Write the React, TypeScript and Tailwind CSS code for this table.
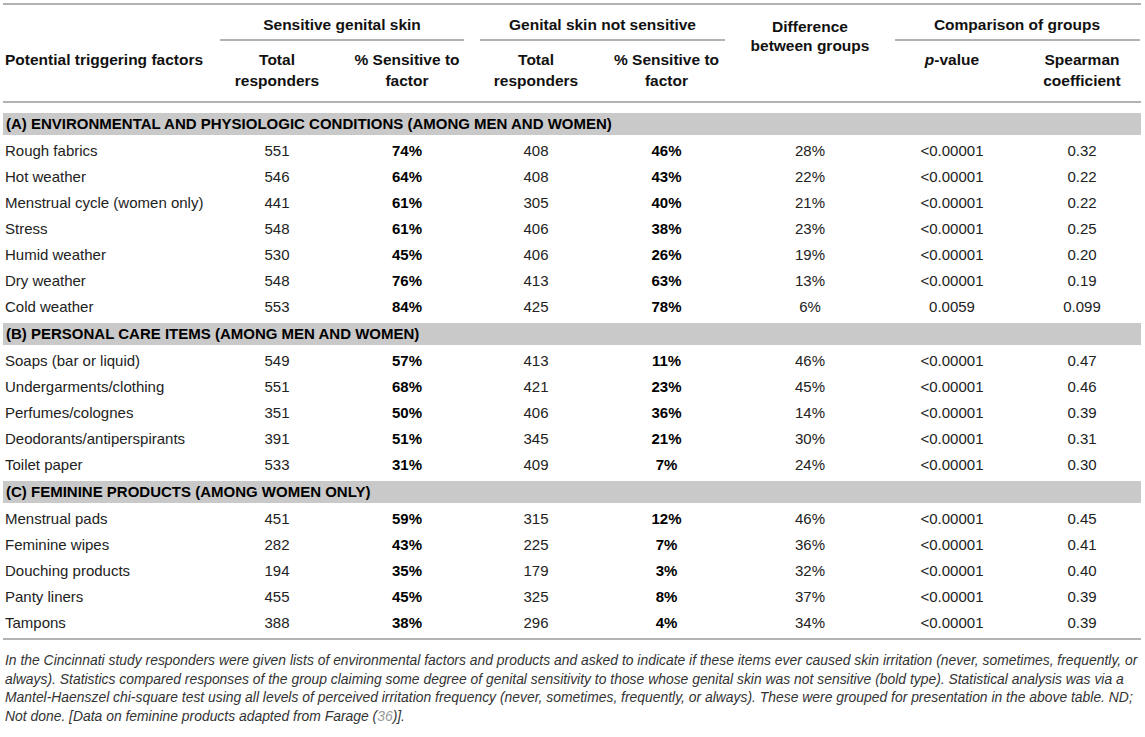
type Row = [string, string, string, string, string, string, string, string];

type Section = {
  title: string;
  rows: Row[];
};

const sections: Section[] = [
  {
    title: "(A) Environmental and physiologic conditions (among men and women)",
    rows: [
      ["Rough fabrics", "551", "74%", "408", "46%", "28%", "<0.00001", "0.32"],
      ["Hot weather", "546", "64%", "408", "43%", "22%", "<0.00001", "0.22"],
      ["Menstrual cycle (women only)", "441", "61%", "305", "40%", "21%", "<0.00001", "0.22"],
      ["Stress", "548", "61%", "406", "38%", "23%", "<0.00001", "0.25"],
      ["Humid weather", "530", "45%", "406", "26%", "19%", "<0.00001", "0.20"],
      ["Dry weather", "548", "76%", "413", "63%", "13%", "<0.00001", "0.19"],
      ["Cold weather", "553", "84%", "425", "78%", "6%", "0.0059", "0.099"],
    ],
  },
  {
    title: "(B) Personal care items (among men and women)",
    rows: [
      ["Soaps (bar or liquid)", "549", "57%", "413", "11%", "46%", "<0.00001", "0.47"],
      ["Undergarments/clothing", "551", "68%", "421", "23%", "45%", "<0.00001", "0.46"],
      ["Perfumes/colognes", "351", "50%", "406", "36%", "14%", "<0.00001", "0.39"],
      ["Deodorants/antiperspirants", "391", "51%", "345", "21%", "30%", "<0.00001", "0.31"],
      ["Toilet paper", "533", "31%", "409", "7%", "24%", "<0.00001", "0.30"],
    ],
  },
  {
    title: "(C) Feminine products (among women only)",
    rows: [
      ["Menstrual pads", "451", "59%", "315", "12%", "46%", "<0.00001", "0.45"],
      ["Feminine wipes", "282", "43%", "225", "7%", "36%", "<0.00001", "0.41"],
      ["Douching products", "194", "35%", "179", "3%", "32%", "<0.00001", "0.40"],
      ["Panty liners", "455", "45%", "325", "8%", "37%", "<0.00001", "0.39"],
      ["Tampons", "388", "38%", "296", "4%", "34%", "<0.00001", "0.39"],
    ],
  },
];

const Rule = ({ className = "" }: { className?: string }) => (
  <div className={`h-[2px] bg-[#b3b3b3] ${className}`} />
);

const DataRow = ({ row }: { row: Row }) => (
  <div className="flex h-[26px] items-center text-[#222]">
    <div className="w-[209px] pl-[2px]">{row[0]}</div>
    <div className="w-[130px] text-center">{row[1]}</div>
    <div className="w-[130px] text-center font-bold text-black">{row[2]}</div>
    <div className="w-[128px] text-center">{row[3]}</div>
    <div className="w-[133px] text-center font-bold text-black">{row[4]}</div>
    <div className="w-[154px] text-center">{row[5]}</div>
    <div className="w-[130px] text-center">{row[6]}</div>
    <div className="w-[124px] pl-[6px] text-center">{row[7]}</div>
  </div>
);

export default function App() {
  return (
    <div className="min-h-[737px] bg-white font-['Liberation_Sans',Arial,sans-serif] text-[15px]">
      <div className="ml-[3px] w-[1138px] pt-[3px]">
        <Rule />

        {/* header */}
        <div className="flex h-[96px] text-[15.5px] font-bold leading-[21px] text-[#111]">
          <div className="w-[209px] pl-[2px] pt-[44px]">Potential triggering factors</div>

          <div className="w-[260px] pt-[10px]">
            <div className="text-center leading-[20px]">Sensitive genital skin</div>
            <Rule className="mx-2 mt-[4px]" />
            <div className="mt-[8px] flex">
              <div className="w-[130px] text-center">Total<br />responders</div>
              <div className="w-[130px] text-center">% Sensitive to<br />factor</div>
            </div>
          </div>

          <div className="w-[261px] pt-[10px]">
            <div className="text-center leading-[20px]">Genital skin not sensitive</div>
            <Rule className="mx-2 mt-[4px]" />
            <div className="mt-[8px] flex">
              <div className="w-[128px] text-center">Total<br />responders</div>
              <div className="w-[133px] text-center">% Sensitive to<br />factor</div>
            </div>
          </div>

          <div className="w-[154px] pt-[12px] text-center leading-[19px]">
            Difference<br />between groups
          </div>

          <div className="w-[254px] pt-[10px]">
            <div className="pl-[6px] text-center leading-[20px]">Comparison of groups</div>
            <Rule className="ml-2 mr-[1px] mt-[4px]" />
            <div className="mt-[8px] flex">
              <div className="w-[130px] text-center">
                <span className="italic">p</span>-value
              </div>
              <div className="w-[124px] pl-[6px] text-center">Spearman<br />coefficient</div>
            </div>
          </div>
        </div>

        <Rule />

        <div className="pt-[10px]">
          {sections.map((section, i) => (
            <div key={section.title} className={i > 0 ? "mt-[3px]" : ""}>
              <div className="flex h-[22px] items-center bg-[#c9c9c9] pl-[3px] font-bold uppercase text-black">
                {section.title}
              </div>
              <div className="mt-[3px]">
                {section.rows.map(row => (
                  <DataRow key={row[0]} row={row} />
                ))}
              </div>
            </div>
          ))}
        </div>

        <Rule className="mt-[2px]" />

        <p className="mt-[11px] whitespace-nowrap pl-[2px] text-[13.9px] italic leading-[18.7px] text-[#333]">
          In the Cincinnati study responders were given lists of environmental factors and products and asked to
          indicate if these items ever caused skin irritation (never, sometimes, frequently, or
          <br />
          always). Statistics compared responses of the group claiming some degree of genital sensitivity to those
          whose genital skin was not sensitive (bold type). Statistical analysis was via a
          <br />
          Mantel-Haenszel chi-square test using all levels of perceived irritation frequency (never, sometimes,
          frequently, or always). These were grouped for presentation in the above table. ND;
          <br />
          Not done. [Data on feminine products adapted from Farage (<span className="text-[#999]">36</span>)].
        </p>
      </div>
    </div>
  );
}
